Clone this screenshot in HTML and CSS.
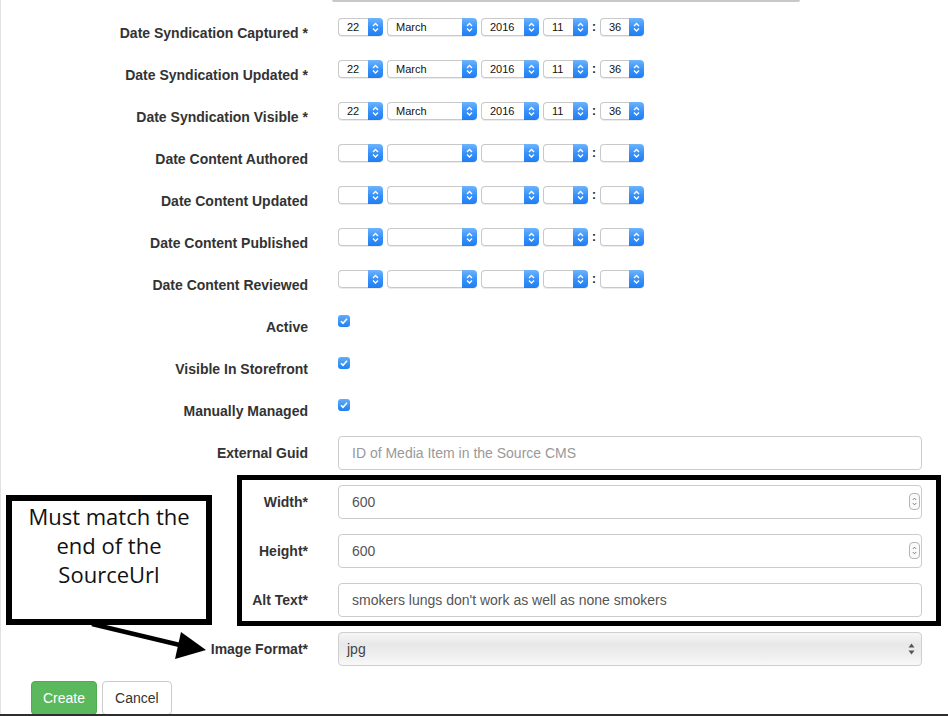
FILE: index.html
```html
<!DOCTYPE html>
<html>
<head>
<meta charset="utf-8">
<title>Media Item</title>
<link rel="stylesheet" href="styles.css">
</head>
<body>
<svg class="defs" width="0" height="0">
  <symbol id="chev" viewBox="0 0 15 18">
    <polyline points="5,8 7.5,5.5 10,8" fill="none" stroke="#fff" stroke-width="1.3"/>
    <polyline points="5,10.5 7.5,13 10,10.5" fill="none" stroke="#fff" stroke-width="1.3"/>
  </symbol>
  <symbol id="tick" viewBox="0 0 12 12">
    <polyline points="3,6.2 5,8.3 9,3.8" fill="none" stroke="#fff" stroke-width="1.6"/>
  </symbol>
</svg>
<div class="page">
  <div class="topline"></div>
  <div class="form">
    <div class="row">
      <div class="lbl">Date Syndication Captured *</div>
      <div class="dates">
        <div class="sel w-day"><span class="val">22</span><span class="btn"><svg><use href="#chev"/></svg></span></div>
        <div class="sel w-month"><span class="val">March</span><span class="btn"><svg><use href="#chev"/></svg></span></div>
        <div class="sel w-year"><span class="val">2016</span><span class="btn"><svg><use href="#chev"/></svg></span></div>
        <div class="sel w-day"><span class="val">11</span><span class="btn"><svg><use href="#chev"/></svg></span></div>
        <span class="colon">:</span>
        <div class="sel w-min"><span class="val">36</span><span class="btn"><svg><use href="#chev"/></svg></span></div>
      </div>
    </div>
    <div class="row">
      <div class="lbl">Date Syndication Updated *</div>
      <div class="dates">
        <div class="sel w-day"><span class="val">22</span><span class="btn"><svg><use href="#chev"/></svg></span></div>
        <div class="sel w-month"><span class="val">March</span><span class="btn"><svg><use href="#chev"/></svg></span></div>
        <div class="sel w-year"><span class="val">2016</span><span class="btn"><svg><use href="#chev"/></svg></span></div>
        <div class="sel w-day"><span class="val">11</span><span class="btn"><svg><use href="#chev"/></svg></span></div>
        <span class="colon">:</span>
        <div class="sel w-min"><span class="val">36</span><span class="btn"><svg><use href="#chev"/></svg></span></div>
      </div>
    </div>
    <div class="row">
      <div class="lbl">Date Syndication Visible *</div>
      <div class="dates">
        <div class="sel w-day"><span class="val">22</span><span class="btn"><svg><use href="#chev"/></svg></span></div>
        <div class="sel w-month"><span class="val">March</span><span class="btn"><svg><use href="#chev"/></svg></span></div>
        <div class="sel w-year"><span class="val">2016</span><span class="btn"><svg><use href="#chev"/></svg></span></div>
        <div class="sel w-day"><span class="val">11</span><span class="btn"><svg><use href="#chev"/></svg></span></div>
        <span class="colon">:</span>
        <div class="sel w-min"><span class="val">36</span><span class="btn"><svg><use href="#chev"/></svg></span></div>
      </div>
    </div>
    <div class="row">
      <div class="lbl">Date Content Authored</div>
      <div class="dates">
        <div class="sel w-day"><span class="val"></span><span class="btn"><svg><use href="#chev"/></svg></span></div>
        <div class="sel w-month"><span class="val"></span><span class="btn"><svg><use href="#chev"/></svg></span></div>
        <div class="sel w-year"><span class="val"></span><span class="btn"><svg><use href="#chev"/></svg></span></div>
        <div class="sel w-day"><span class="val"></span><span class="btn"><svg><use href="#chev"/></svg></span></div>
        <span class="colon">:</span>
        <div class="sel w-min"><span class="val"></span><span class="btn"><svg><use href="#chev"/></svg></span></div>
      </div>
    </div>
    <div class="row">
      <div class="lbl">Date Content Updated</div>
      <div class="dates">
        <div class="sel w-day"><span class="val"></span><span class="btn"><svg><use href="#chev"/></svg></span></div>
        <div class="sel w-month"><span class="val"></span><span class="btn"><svg><use href="#chev"/></svg></span></div>
        <div class="sel w-year"><span class="val"></span><span class="btn"><svg><use href="#chev"/></svg></span></div>
        <div class="sel w-day"><span class="val"></span><span class="btn"><svg><use href="#chev"/></svg></span></div>
        <span class="colon">:</span>
        <div class="sel w-min"><span class="val"></span><span class="btn"><svg><use href="#chev"/></svg></span></div>
      </div>
    </div>
    <div class="row">
      <div class="lbl">Date Content Published</div>
      <div class="dates">
        <div class="sel w-day"><span class="val"></span><span class="btn"><svg><use href="#chev"/></svg></span></div>
        <div class="sel w-month"><span class="val"></span><span class="btn"><svg><use href="#chev"/></svg></span></div>
        <div class="sel w-year"><span class="val"></span><span class="btn"><svg><use href="#chev"/></svg></span></div>
        <div class="sel w-day"><span class="val"></span><span class="btn"><svg><use href="#chev"/></svg></span></div>
        <span class="colon">:</span>
        <div class="sel w-min"><span class="val"></span><span class="btn"><svg><use href="#chev"/></svg></span></div>
      </div>
    </div>
    <div class="row">
      <div class="lbl">Date Content Reviewed</div>
      <div class="dates">
        <div class="sel w-day"><span class="val"></span><span class="btn"><svg><use href="#chev"/></svg></span></div>
        <div class="sel w-month"><span class="val"></span><span class="btn"><svg><use href="#chev"/></svg></span></div>
        <div class="sel w-year"><span class="val"></span><span class="btn"><svg><use href="#chev"/></svg></span></div>
        <div class="sel w-day"><span class="val"></span><span class="btn"><svg><use href="#chev"/></svg></span></div>
        <span class="colon">:</span>
        <div class="sel w-min"><span class="val"></span><span class="btn"><svg><use href="#chev"/></svg></span></div>
      </div>
    </div>
    <div class="row">
      <div class="lbl">Active</div>
      <div class="chk-wrap"><span class="chk"><svg><use href="#tick"/></svg></span></div>
    </div>
    <div class="row">
      <div class="lbl">Visible In Storefront</div>
      <div class="chk-wrap"><span class="chk"><svg><use href="#tick"/></svg></span></div>
    </div>
    <div class="row">
      <div class="lbl">Manually Managed</div>
      <div class="chk-wrap"><span class="chk"><svg><use href="#tick"/></svg></span></div>
    </div>
    <div class="row">
      <div class="lbl">External Guid</div>
      <div class="input placeholder">ID of Media Item in the Source CMS</div>
    </div>
    <div class="row">
      <div class="lbl">Width*</div>
      <div class="input number">600<span class="spin"><svg viewBox="0 0 11 17"><polyline points="3.5,6.5 5.5,4.5 7.5,6.5" fill="none" stroke="#555" stroke-width="1"/><polyline points="3.5,10.5 5.5,12.5 7.5,10.5" fill="none" stroke="#555" stroke-width="1"/></svg></span></div>
    </div>
    <div class="row">
      <div class="lbl">Height*</div>
      <div class="input number">600<span class="spin"><svg viewBox="0 0 11 17"><polyline points="3.5,6.5 5.5,4.5 7.5,6.5" fill="none" stroke="#555" stroke-width="1"/><polyline points="3.5,10.5 5.5,12.5 7.5,10.5" fill="none" stroke="#555" stroke-width="1"/></svg></span></div>
    </div>
    <div class="row">
      <div class="lbl">Alt Text*</div>
      <div class="input">smokers lungs don't work as well as none smokers</div>
    </div>
    <div class="row">
      <div class="lbl">Image Format*</div>
      <div class="fmt">jpg<svg class="updown" viewBox="0 0 7 12"><polygon points="3.5,0.5 6.5,4.5 0.5,4.5" fill="#555"/><polygon points="0.5,7.5 6.5,7.5 3.5,11.5" fill="#555"/></svg></div>
    </div>
    <div class="actions">
      <span class="button create">Create</span>
      <span class="button cancel">Cancel</span>
    </div>
  </div>

  <div class="highlight"></div>
  <div class="note">Must match the<br>end of the<br>SourceUrl</div>
  <svg class="arrow" width="948" height="716" viewBox="0 0 948 716">
    <line x1="92" y1="624" x2="184" y2="646" stroke="#000" stroke-width="4.5"/>
    <polygon points="181,632 206,650 175,659" fill="#000"/>
  </svg>
  <div class="edge"></div>
</div>
</body>
</html>
```

FILE: styles.css
```css
* { box-sizing: border-box; }
html, body { margin: 0; padding: 0; background: #fff; }
body {
  font-family: "Liberation Sans", Arial, sans-serif;
  font-size: 14px;
  color: #333;
}
.defs { position: absolute; width: 0; height: 0; overflow: hidden; }
.page {
  position: relative;
  width: 948px;
  height: 716px;
  overflow: hidden;
  box-shadow: inset 1px 0 0 #e2e2e2;
}
.topline {
  margin-left: 332px;
  width: 468px;
  height: 2px;
  background: #c8c8c8;
  border-radius: 0 0 2px 2px;
}
.form { padding-top: 14px; }
.row {
  display: grid;
  grid-template-columns: 308px 584px;
  column-gap: 30px;
  min-height: 27px;
  margin-bottom: 15px;
}
.lbl {
  padding-top: 7px;
  line-height: 20px;
  font-weight: bold;
  text-align: right;
  color: #333;
  white-space: nowrap;
}
.dates {
  display: flex;
  align-items: center;
  gap: 4px;
  height: 18px;
  margin-top: 2px;
}
.sel {
  display: flex;
  height: 18px;
  font-size: 11px;
  color: #111;
  box-shadow: 0 1px 0 rgba(0,0,0,0.08);
  border-radius: 4px;
}
.sel .val {
  flex: 1;
  border: 1px solid #c9c9c9;
  border-right: none;
  border-radius: 4px 0 0 4px;
  background: #fff;
  padding-left: 8px;
  line-height: 16px;
}
.sel .btn {
  width: 15px;
  height: 18px;
  border-radius: 0 4px 4px 0;
  background: linear-gradient(to bottom, #6db4fc 0%, #3b92f8 50%, #1c7ef5 100%);
}
.sel .btn svg { display: block; width: 15px; height: 18px; }
.w-day { width: 45px; }
.w-month { width: 90px; }
.w-year { width: 58px; }
.w-min { width: 44px; }
.colon {
  width: 4px;
  text-align: center;
  font-size: 12px;
  font-weight: bold;
  line-height: 18px;
  color: #222;
}
.chk-wrap { padding-top: 5px; }
.chk {
  display: block;
  width: 12px;
  height: 12px;
  border-radius: 3px;
  background: linear-gradient(to bottom, #60aefb, #1f80f2);
}
.chk svg { display: block; width: 12px; height: 12px; }
.input {
  position: relative;
  height: 34px;
  border: 1px solid #ccc;
  border-radius: 4px;
  padding: 0 13px;
  line-height: 32px;
  color: #555;
  background: #fff;
  white-space: nowrap;
}
.input.placeholder { color: #999; }
.spin {
  position: absolute;
  right: 1px;
  top: 7px;
  width: 11px;
  height: 17px;
  border: 1px solid #b5b5b5;
  border-radius: 4px;
  background: #fafafa;
}
.spin svg { display: block; width: 9px; height: 15px; }
.fmt {
  position: relative;
  height: 34px;
  border: 1px solid #cfcfcf;
  border-radius: 4px;
  padding-left: 8px;
  line-height: 32px;
  color: #444;
  background: linear-gradient(to bottom, #f6f6f6 0%, #e8e8e8 35%, #ededed 65%, #f8f8f8 100%);
}
.updown {
  position: absolute;
  right: 6px;
  top: 10px;
  width: 7px;
  height: 12px;
}
.actions {
  display: flex;
  gap: 5px;
  margin-left: 31px;
}
.button {
  display: block;
  height: 34px;
  padding: 0 12px;
  line-height: 32px;
  border-radius: 4px;
  border: 1px solid transparent;
  font-size: 14px;
}
.create {
  padding: 0 11px;
  background: #5cb85c;
  border-color: #4cae4c;
  color: #fff;
}
.cancel {
  padding: 0 12px;
  background: #fff;
  border-color: #ccc;
  color: #333;
}
.highlight {
  position: absolute;
  left: 237px;
  top: 475px;
  width: 704px;
  height: 151px;
  border: 5px solid #000;
}
.note {
  position: absolute;
  left: 6px;
  top: 495px;
  width: 206px;
  height: 130px;
  border: 6px solid #000;
  background: #fff;
  padding-top: 1px;
  text-align: center;
  font-family: "Open Sans", "Liberation Sans", sans-serif;
  font-size: 22px;
  line-height: 29px;
  color: #111;
}
.arrow {
  position: absolute;
  left: 0;
  top: 0;
  pointer-events: none;
}
.edge {
  position: absolute;
  left: 0;
  right: 0;
  bottom: 0;
  height: 2px;
  background: #2e2e2e;
}
```
